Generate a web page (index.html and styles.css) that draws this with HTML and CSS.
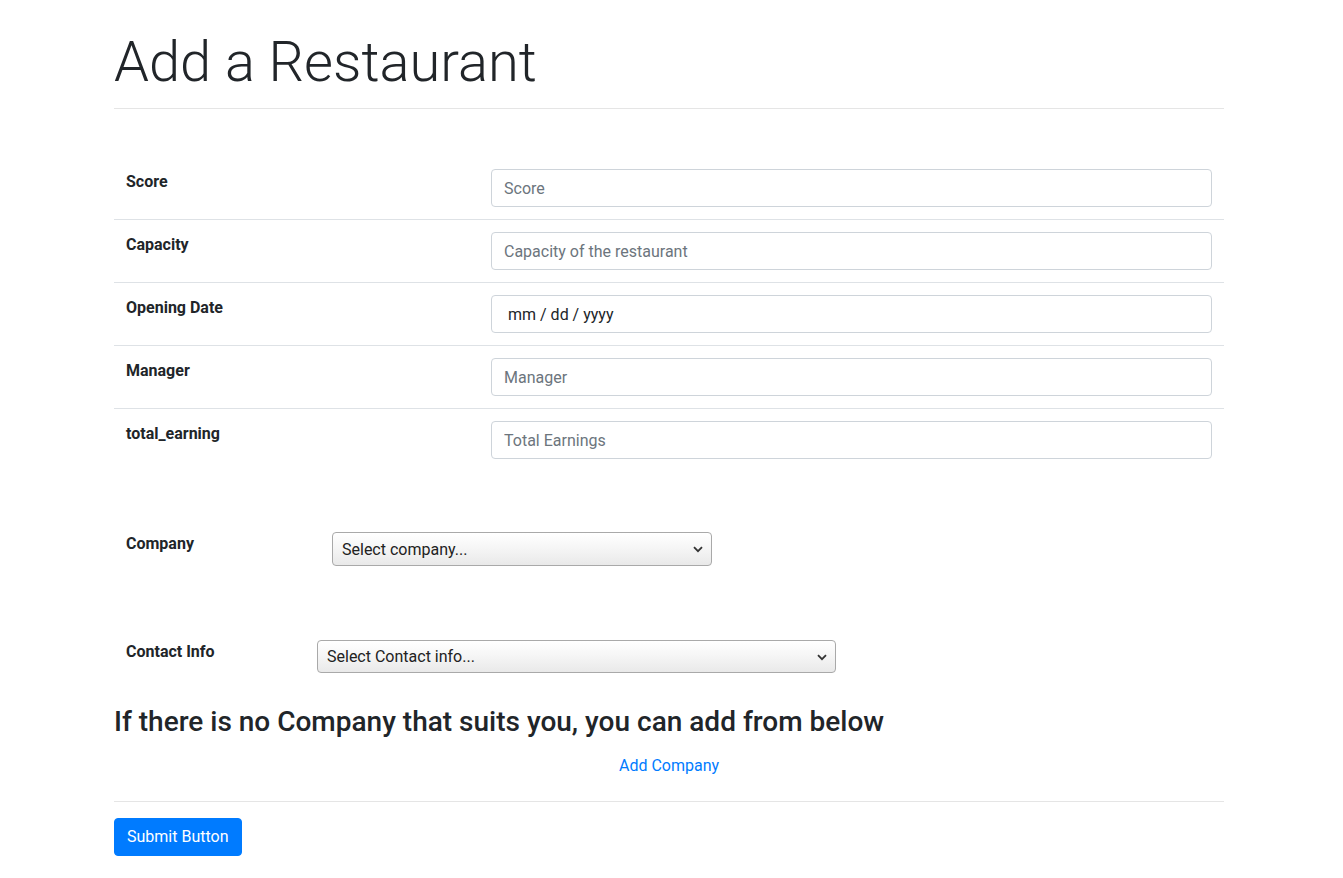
FILE: index.html
```html
<!DOCTYPE html>
<html lang="en">
<head>
<meta charset="utf-8">
<title>Add a Restaurant</title>
<link rel="stylesheet" href="styles.css">
</head>
<body>
<div class="container">
  <h1 class="title">Add a Restaurant</h1>
  <hr class="rule rule-top">
  <form class="form">
    <div class="fields">
      <div class="row">
        <div class="label">Score</div>
        <div class="cell"><input class="control" type="text" placeholder="Score"></div>
      </div>
      <div class="row">
        <div class="label">Capacity</div>
        <div class="cell"><input class="control" type="text" placeholder="Capacity of the restaurant"></div>
      </div>
      <div class="row">
        <div class="label">Opening Date</div>
        <div class="cell"><input class="control control-date" type="text" placeholder="mm / dd / yyyy"></div>
      </div>
      <div class="row">
        <div class="label">Manager</div>
        <div class="cell"><input class="control" type="text" placeholder="Manager"></div>
      </div>
      <div class="row">
        <div class="label">total_earning</div>
        <div class="cell"><input class="control" type="text" placeholder="Total Earnings"></div>
      </div>
    </div>

    <div class="pick pick-company">
      <div class="label">Company</div>
      <div class="select-wrap select-company">
        <select class="select"><option>Select company...</option></select>
        <svg class="chev" width="10" height="7" viewBox="0 0 10 7"><path d="M1 1.2 L5 5.2 L9 1.2" fill="none" stroke="#333" stroke-width="1.8"/></svg>
      </div>
    </div>

    <div class="pick pick-contact">
      <div class="label">Contact Info</div>
      <div class="select-wrap select-contact">
        <select class="select"><option>Select Contact info...</option></select>
        <svg class="chev" width="10" height="7" viewBox="0 0 10 7"><path d="M1 1.2 L5 5.2 L9 1.2" fill="none" stroke="#333" stroke-width="1.8"/></svg>
      </div>
    </div>

    <h3 class="subhead">If there is no Company that suits you, you can add from below</h3>
    <div class="link-row"><a class="link" href="#">Add Company</a></div>
    <hr class="rule rule-bottom">
    <button class="btn" type="button">Submit Button</button>
  </form>
</div>
</body>
</html>
```
FILE: styles.css
```css
* { box-sizing: border-box; }
html, body { margin: 0; padding: 0; background: #fff; }
body {
  font-family: Roboto, "Liberation Sans", Arial, sans-serif;
  font-size: 16px;
  line-height: 1.5;
  color: #212529;
}
.container {
  width: 1110px;
  margin: 0 0 0 114px;
  padding-top: 29px;
  padding-bottom: 20px;
}
.title {
  margin: 0;
  font-size: 56px;
  font-weight: 300;
  line-height: 1.2;
  letter-spacing: 0;
}
.rule {
  border: 0;
  border-top: 1px solid rgba(0,0,0,0.1);
  margin: 0;
}
.rule-top { margin-top: 12px; }
.fields { margin-top: 48px; }
.row {
  display: grid;
  grid-template-columns: 365px 1fr;
  border-top: 1px solid #dee2e6;
}
.row:first-child { border-top: 0; }
.label {
  font-weight: 700;
  padding: 13px 12px 11px;
  line-height: 24px;
}
.cell { padding: 12px; }
.control {
  display: block;
  width: 100%;
  height: 38px;
  padding: 6px 12px;
  font: inherit;
  font-size: 16px;
  line-height: 24px;
  color: #495057;
  background: #fff;
  border: 1px solid #ced4da;
  border-radius: 4px;
  outline: none;
}
.control::placeholder { color: #6c757d; opacity: 1; }
.control-date { padding-left: 16px; }
.control-date::placeholder { color: #212529; }
.pick {
  display: flex;
  align-items: flex-start;
}
.pick .label { padding: 0 12px; }
.pick-company { margin-top: 60px; }
.pick-company .label { width: 218px; padding-top: 1px; }
.pick-contact { margin-top: 74px; }
.pick-contact .label { width: 203px; padding-top: 1px; }
.select-wrap { position: relative; }
.select-company { width: 380px; margin-top: 1px; }
.select-contact { width: 519px; margin-top: 1px; }
.pick-contact { margin-top: 73px; }
.select {
  -webkit-appearance: none;
  appearance: none;
  display: block;
  width: 100%;
  height: 34px;
  padding: 1px 30px 0 9px;
  font: inherit;
  font-size: 16px;
  color: #222;
  background: linear-gradient(#ffffff, #f6f6f6 45%, #e9e9e9);
  border: 1px solid #a9a9a9;
  border-radius: 4px;
  outline: none;
}
.select-contact .select { height: 33px; }
.chev {
  position: absolute;
  right: 9px;
  top: 14px;
  pointer-events: none;
}
.subhead {
  margin: 32px 0 0;
  font-size: 28px;
  font-weight: 500;
  line-height: 1.2;
}
.link-row {
  text-align: center;
  margin-top: 15px;
}
.link {
  color: #007bff;
  text-decoration: none;
}
.rule-bottom { margin-top: 23px; }
.btn {
  margin-top: 16px;
  display: inline-block;
  height: 38px;
  padding: 6px 12px;
  font: inherit;
  font-size: 16px;
  line-height: 24px;
  color: #fff;
  background: #007bff;
  border: 1px solid #007bff;
  border-radius: 4px;
  cursor: pointer;
}
```
